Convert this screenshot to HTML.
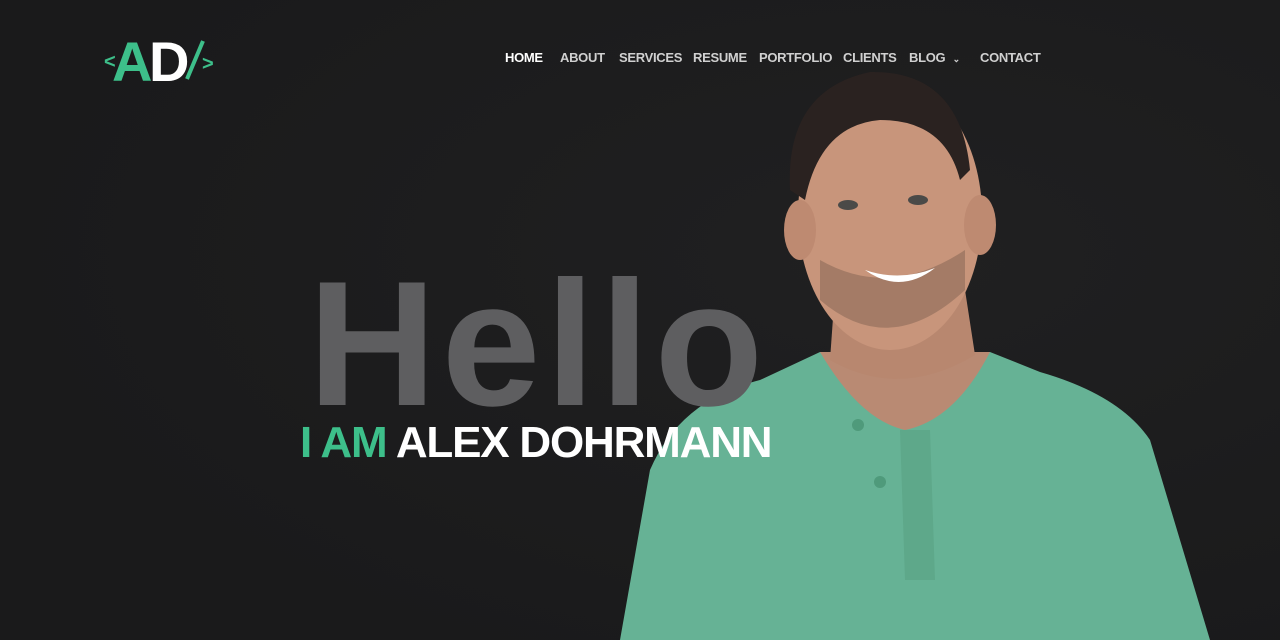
<!DOCTYPE html>
<html><head><style>
body{margin:0;width:1280px;height:640px;overflow:hidden;background:#1d1d1e;font-family:"Liberation Sans",sans-serif;position:relative}
.nav{position:absolute;top:50px;left:505px;font-size:13px;font-weight:bold;color:#d0d0d0;white-space:nowrap;letter-spacing:-0.3px}
.nav span{position:absolute;top:0}
.hello{position:absolute;left:308px;top:255px;font-size:178px;font-weight:bold;color:#5e5e60;letter-spacing:5px;line-height:1}
.name{position:absolute;left:300px;top:419px;font-size:44px;font-weight:bold;color:#fff;letter-spacing:-1.2px;white-space:nowrap;line-height:1.1}
.name b{color:#3dbf8a}
</style></head><body>
<svg style="position:absolute;left:0;top:0" width="1280" height="640">
<defs><radialGradient id="bg" cx="0.7" cy="0.4" r="0.7"><stop offset="0" stop-color="#202021"/><stop offset="1" stop-color="#1a1a1b"/></radialGradient></defs>
<rect width="1280" height="640" fill="url(#bg)"/>
<path d="M620 640 L650 470 Q680 400 760 380 L820 352 L990 352 L1040 372 Q1120 395 1150 440 L1210 640 Z" fill="#66b295"/>
<path d="M820 352 Q860 420 905 430 Q955 420 990 352 Z" fill="#b98a73"/>
<path d="M900 430 L905 580 L935 580 L930 430 Z" fill="#5ea88a"/>
<circle cx="858" cy="425" r="6" fill="#4f9a7b"/><circle cx="880" cy="482" r="6" fill="#4f9a7b"/>
<path d="M835 290 L830 360 Q900 400 975 355 L965 290 Z" fill="#b8876f"/>
<ellipse cx="890" cy="215" rx="92" ry="135" fill="#c8957b"/>
<ellipse cx="800" cy="230" rx="16" ry="30" fill="#be8a71"/>
<ellipse cx="980" cy="225" rx="16" ry="30" fill="#be8a71"/>
<path d="M790 190 Q785 90 870 72 Q960 70 970 170 L960 180 Q945 120 880 120 Q820 125 805 200 Z" fill="#2a2220"/>
<path d="M820 300 Q890 360 965 290 L965 250 Q890 300 820 260 Z" fill="#8c6a58" opacity=".6"/>
<path d="M865 270 Q900 295 935 268 Q900 282 865 270 Z" fill="#fff"/>
<ellipse cx="848" cy="205" rx="10" ry="5" fill="#4a4a48"/><ellipse cx="918" cy="200" rx="10" ry="5" fill="#4a4a48"/>
<text x="104" y="68" font-family="Liberation Sans" font-weight="bold" font-size="20" fill="#3dbf8a">&lt;</text>
<text x="112" y="81" font-family="Liberation Sans" font-weight="bold" font-size="56" fill="#3dbf8a" letter-spacing="-3">A</text>
<text x="149" y="81" font-family="Liberation Sans" font-weight="bold" font-size="56" fill="#fff">D</text>
<path d="M187 79 L203 41" stroke="#3dbf8a" stroke-width="4"/>
<text x="202" y="70" font-family="Liberation Sans" font-weight="bold" font-size="20" fill="#3dbf8a">&gt;</text>
</svg>
<div class="hello">Hello</div>
<div class="name"><b>I AM</b> ALEX DOHRMANN</div>
<div class="nav">
<span style="left:0;color:#fff">HOME</span>
<span style="left:55px">ABOUT</span>
<span style="left:114px">SERVICES</span>
<span style="left:188px">RESUME</span>
<span style="left:254px">PORTFOLIO</span>
<span style="left:338px">CLIENTS</span>
<span style="left:404px">BLOG <small style="font-size:9px;margin-left:4px">&#8964;</small></span>
<span style="left:475px">CONTACT</span>
</div>
</body></html>
